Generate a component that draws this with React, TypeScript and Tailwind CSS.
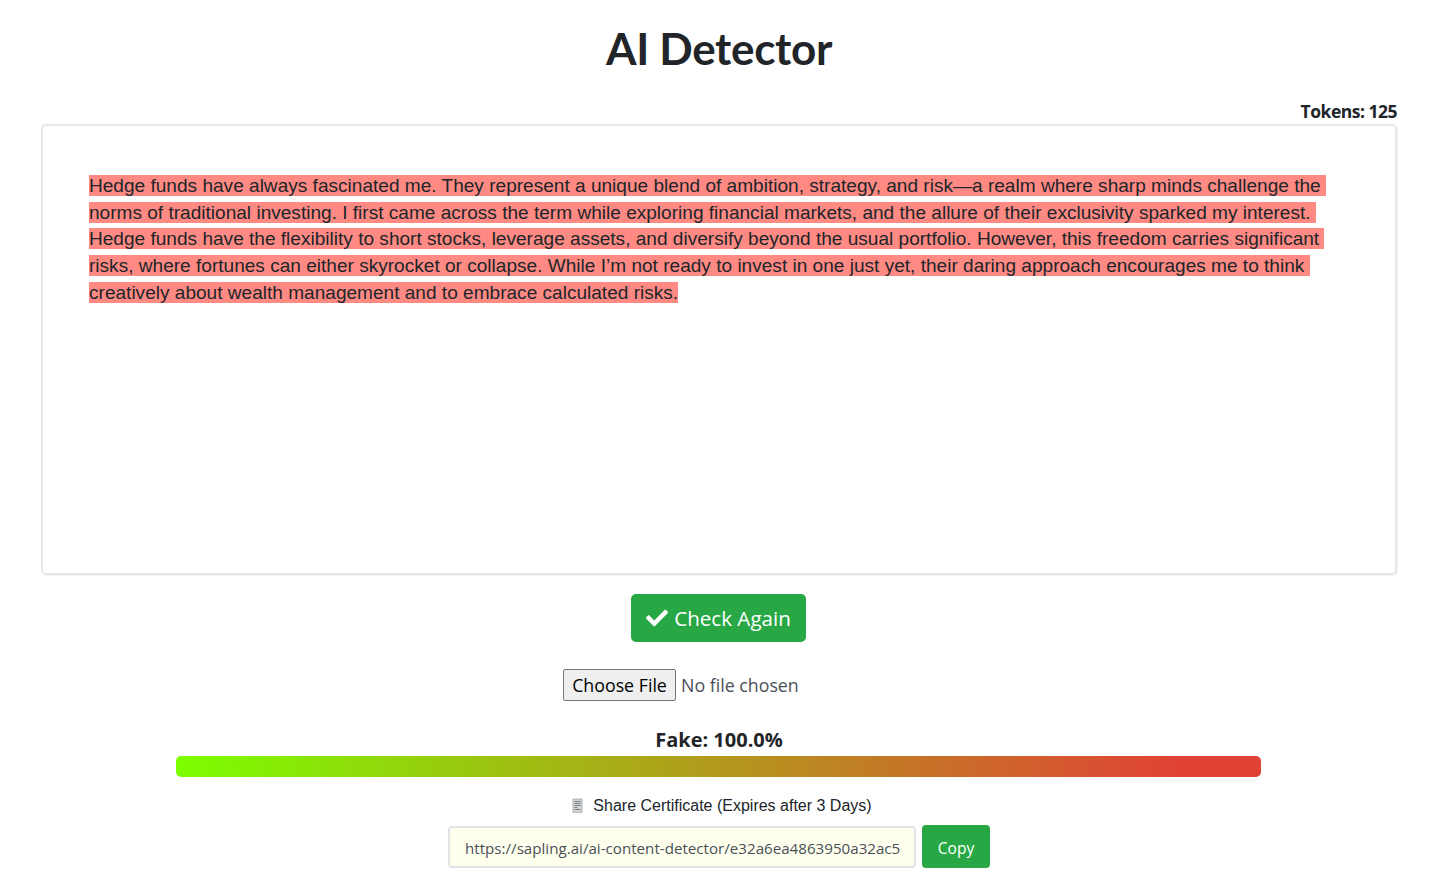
import { FaCheck } from "react-icons/fa"

const lines = [
  "Hedge funds have always fascinated me. They represent a unique blend of ambition, strategy, and risk—a realm where sharp minds challenge the\u00a0",
  "norms of traditional investing. I first came across the term while exploring financial markets, and the allure of their exclusivity sparked my interest.\u00a0",
  "Hedge funds have the flexibility to short stocks, leverage assets, and diversify beyond the usual portfolio. However, this freedom carries significant\u00a0",
  "risks, where fortunes can either skyrocket or collapse. While I’m not ready to invest in one just yet, their daring approach encourages me to think\u00a0",
  "creatively about wealth management and to embrace calculated risks.",
]

function ReceiptIcon() {
  return (
    <svg width="14" height="16" viewBox="0 0 14 16" className="shrink-0">
      <path d="M2 1h9v14l-1.500-1-1.500 1-1.500-1-1.500 1-1.500-1L2 15z" fill="#d4d6d8" stroke="#8a8f94" strokeWidth="0.6" />
      <path d="M3.500 3.500h6M3.500 5.500h6M3.500 7.500h6M3.500 9.500h3M3.500 11.500h6" stroke="#70767b" strokeWidth="0.9" />
    </svg>
  )
}

export default function App() {
  return (
    <div className="h-[888px] overflow-hidden bg-white pl-[41px] pr-[44px] font-['Open_Sans','Noto_Sans',sans-serif] text-[#212529]">
      {/* Title */}
      <h1 className="h-[93px] pt-[19px] text-center font-['Lato',sans-serif] text-[44px] leading-[58px] font-bold tracking-[-0.3px]">
        AI Detector
      </h1>

      <div className="h-[31px] pt-[6px] text-right text-[17.5px] leading-[24px] font-bold tracking-[-0.5px]">
        Tokens: 125
      </div>

      {/* Text box */}
      <div className="h-[451px] rounded-[5px] border-2 border-[#e8e8e8] bg-white pt-[47px] pl-[46px] shadow-[1px_1px_2px_rgba(0,0,0,0.06)] font-['Liberation_Sans',sans-serif] text-[19.07px] leading-[26.7px] whitespace-nowrap">
        {lines.map((line) => (
          <div key={line}>
            <span className="bg-[#ff8a84]">{line}</span>
          </div>
        ))}
      </div>

      {/* Actions */}
      <div className="mt-[19px] flex justify-center">
        <button className="mr-[1px] flex h-[48px] w-[175px] items-center justify-center gap-[6px] rounded-[5px] bg-[#28a745] text-[20.6px] text-white">
          <FaCheck size={22} />
          Check Again
        </button>
      </div>

      <div className="mt-[26px] flex h-[34px] items-center justify-center">
        <input
          type="file"
          className="w-[312px] text-[17.8px] text-[#495057] file:mr-[5px] file:h-[32px] file:w-[113px] file:rounded-[2px] file:border file:border-solid file:border-[#767676] file:bg-[#efefef] file:text-black"
        />
      </div>

      {/* Score */}
      <div className="mt-[24px] text-center text-[20px] leading-[28px] font-bold">Fake: 100.0%</div>
      <div className="mt-[2px] mr-[136px] ml-[135px] h-[21px] rounded-[5px] bg-[linear-gradient(90deg,#7cff00_0%,#e04335_92%,#e04335_100%)]" />

      {/* Share */}
      <div className="mt-[18px] ml-[5px] flex items-center justify-center gap-[8px] font-['Liberation_Sans',sans-serif] text-[16px] leading-[22px]">
        <ReceiptIcon />
        Share Certificate (Expires after 3 Days)
      </div>
      <div className="mt-[8px] flex justify-center gap-[6px]">
        <input
          readOnly
          value="https://sapling.ai/ai-content-detector/e32a6ea4863950a32ac5"
          className="h-[42px] w-[468px] self-end rounded-[4px] border-2 border-[#e2e3e6] bg-[#ffffee] pt-[1px] pr-[10px] pl-[15px] text-[15.15px] text-[#495057] outline-none"
        />
        <button className="h-[43px] w-[68px] rounded-[4px] bg-[#28a745] pt-[4px] text-[15.5px] text-white">Copy</button>
      </div>
    </div>
  )
}
